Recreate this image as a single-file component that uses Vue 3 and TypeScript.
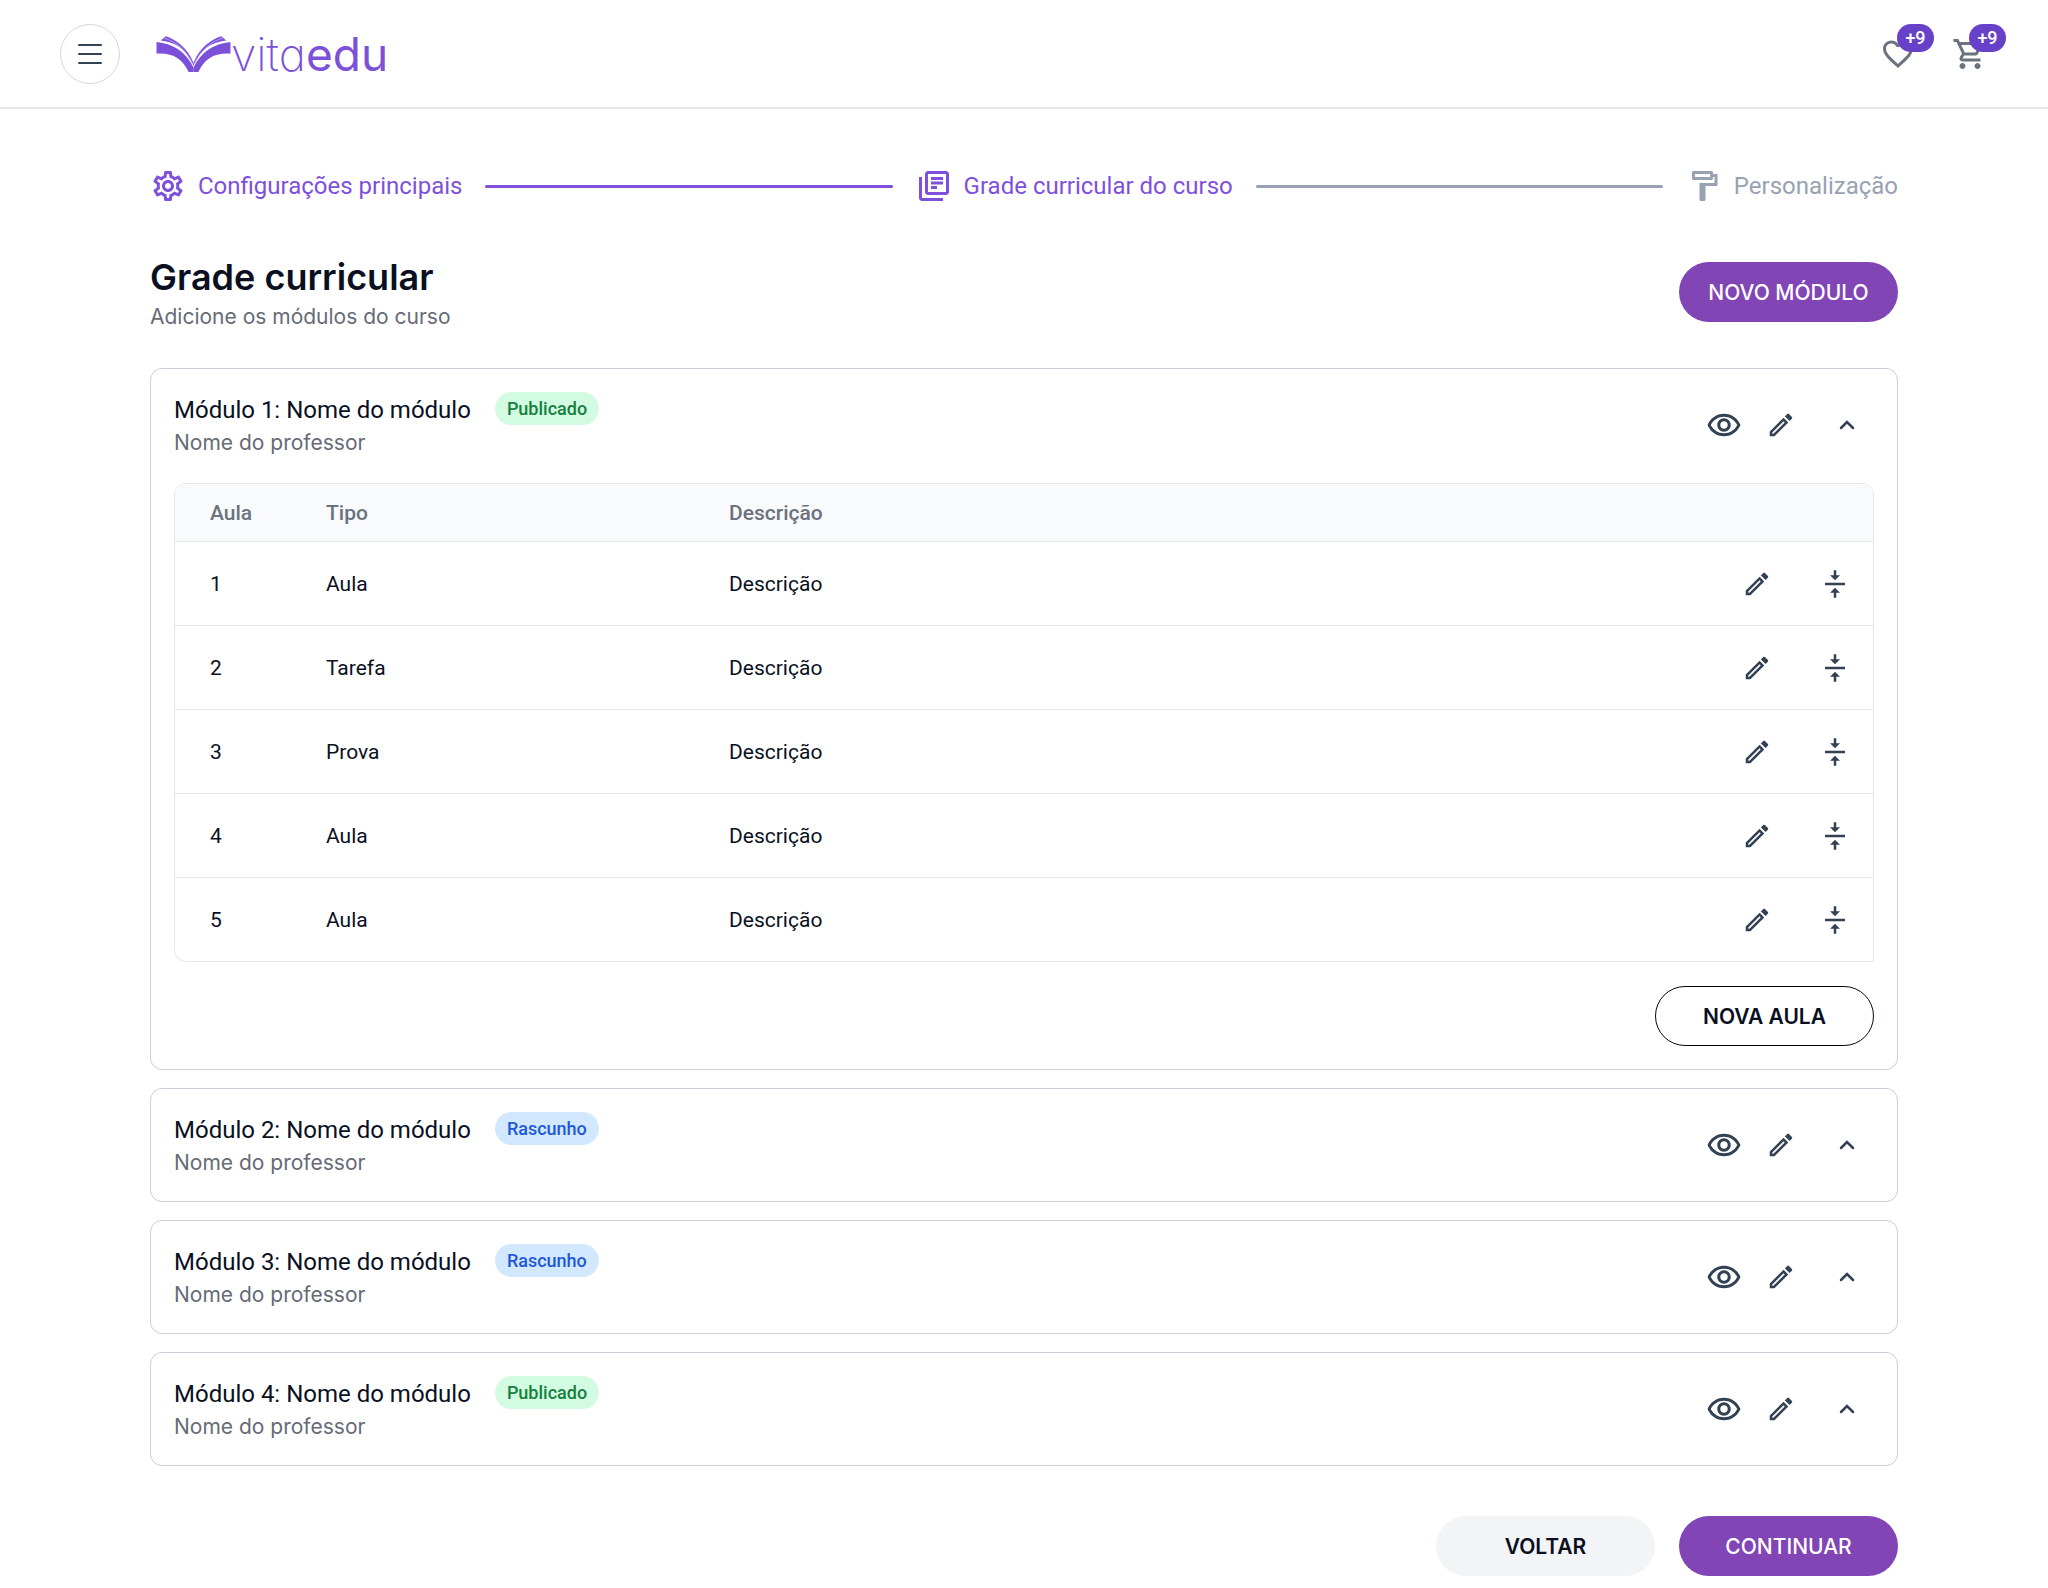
<script setup lang="ts">
import { ref } from 'vue'

type Status = 'Publicado' | 'Rascunho'

interface Lesson {
  id: number
  type: string
  description: string
}

interface CourseModule {
  id: number
  title: string
  teacher: string
  status: Status
  lessons: Lesson[]
}

const icons = {
  settings:
    'M19.43 12.98c.04-.32.07-.64.07-.98 0-.34-.03-.66-.07-.98l2.11-1.65c.19-.15.24-.42.12-.64l-2-3.46c-.09-.16-.26-.25-.44-.25-.06 0-.12.01-.17.03l-2.49 1c-.52-.4-1.08-.73-1.69-.98l-.38-2.65C14.46 2.18 14.25 2 14 2h-4c-.25 0-.46.18-.49.42l-.38 2.65c-.61.25-1.17.59-1.69.98l-2.49-1c-.06-.02-.12-.03-.18-.03-.17 0-.34.09-.43.25l-2 3.46c-.13.22-.07.49.12.64l2.11 1.65c-.04.32-.07.65-.07.98 0 .33.03.66.07.98l-2.11 1.65c-.19.15-.24.42-.12.64l2 3.46c.09.16.26.25.44.25.06 0 .12-.01.17-.03l2.49-1c.52.4 1.08.73 1.69.98l.38 2.65c.03.24.24.42.49.42h4c.25 0 .46-.18.49-.42l.38-2.65c.61-.25 1.17-.59 1.69-.98l2.49 1c.06.02.12.03.18.03.17 0 .34-.09.43-.25l2-3.46c.12-.22.07-.49-.12-.64l-2.11-1.65zm-1.98-1.71c.04.31.05.52.05.73 0 .21-.02.43-.05.73l-.14 1.13.89.7 1.08.84-.7 1.21-1.27-.51-1.04-.42-.9.68c-.43.32-.84.56-1.25.73l-1.06.43-.16 1.13-.2 1.35h-1.4l-.19-1.35-.16-1.13-1.06-.43c-.43-.18-.83-.41-1.23-.71l-.91-.7-1.06.43-1.27.51-.7-1.21 1.08-.84.89-.7-.14-1.13c-.03-.31-.05-.54-.05-.74s.02-.43.05-.73l.14-1.13-.89-.7-1.08-.84.7-1.21 1.27.51 1.04.42.9-.68c.43-.32.84-.56 1.25-.73l1.06-.43.16-1.13.2-1.35h1.39l.19 1.35.16 1.13 1.06.43c.43.18.83.41 1.23.71l.91.7 1.06-.43 1.27-.51.7 1.21-1.07.85-.89.7.14 1.13zM12 8c-2.21 0-4 1.79-4 4s1.79 4 4 4 4-1.79 4-4-1.79-4-4-4zm0 6c-1.1 0-2-.9-2-2s.9-2 2-2 2 .9 2 2-.9 2-2 2z',
  books:
    'M4 6H2v14c0 1.1.9 2 2 2h14v-2H4V6zm16-4H8c-1.1 0-2 .9-2 2v12c0 1.1.9 2 2 2h12c1.1 0 2-.9 2-2V4c0-1.1-.9-2-2-2zm0 14H8V4h12v12zM10 9h8v2h-8zm0 3h4v2h-4zm0-6h8v2h-8z',
  paint:
    'M18 4V3c0-.55-.45-1-1-1H5c-.55 0-1 .45-1 1v4c0 .55.45 1 1 1h12c.55 0 1-.45 1-1V6h1v4H9v11c0 .55.45 1 1 1h2c.55 0 1-.45 1-1v-9h8V4h-3zm-2 2H6V4h10v2z',
  heart:
    'M16.5 3c-1.74 0-3.41.81-4.5 2.09C10.91 3.81 9.24 3 7.5 3 4.42 3 2 5.42 2 8.5c0 3.78 3.4 6.86 8.55 11.54L12 21.35l1.45-1.32C18.6 15.36 22 12.28 22 8.5 22 5.42 19.58 3 16.5 3zm-4.4 15.55l-.1.1-.1-.1C7.14 14.24 4 11.39 4 8.5 4 6.5 5.5 5 7.5 5c1.54 0 3.04.99 3.57 2.36h1.87C13.46 5.99 14.96 5 16.5 5c2 0 3.5 1.5 3.5 3.5 0 2.89-3.14 5.74-7.9 10.05z',
  cart:
    'M15.55 13c.75 0 1.41-.41 1.75-1.03l3.58-6.49c.37-.66-.11-1.48-.87-1.48H5.21l-.94-2H1v2h2l3.6 7.59-1.35 2.44C4.52 15.37 5.48 17 7 17h12v-2H7l1.1-2h7.45zM6.16 6h12.15l-2.76 5H8.53L6.16 6zM7 18c-1.1 0-1.99.9-1.99 2S5.9 22 7 22s2-.9 2-2-.9-2-2-2zm10 0c-1.1 0-1.99.9-1.99 2s.89 2 1.99 2 2-.9 2-2-.9-2-2-2z',
  eye:
    'M12 6c3.79 0 7.17 2.13 8.82 5.5C19.17 14.87 15.79 17 12 17s-7.17-2.13-8.82-5.5C4.83 8.13 8.21 6 12 6m0-2C7 4 2.73 7.11 1 11.5 2.73 15.89 7 19 12 19s9.27-3.11 11-7.5C21.27 7.11 17 4 12 4zm0 5c1.38 0 2.5 1.12 2.5 2.5S13.38 14 12 14s-2.5-1.12-2.5-2.5S10.62 9 12 9m0-2c-2.48 0-4.5 2.02-4.5 4.5S9.52 16 12 16s4.5-2.02 4.5-4.5S14.48 7 12 7z',
  edit:
    'M14.06 9.02l.92.92L5.92 19H5v-.92l9.06-9.06M17.66 3c-.25 0-.51.1-.7.29l-1.83 1.83 3.75 3.75 1.83-1.83c.39-.39.39-1.02 0-1.41l-2.34-2.34c-.2-.2-.45-.29-.71-.29zm-3.6 3.19L3 17.25V21h3.75L17.81 9.94l-3.75-3.75z',
  collapse:
    'M8 19h3v4h2v-4h3l-4-4-4 4zm8-14h-3V1h-2v4H8l4 4 4-4zM4 11v2h16v-2H4z',
}

const lessonTypes = ['Aula', 'Tarefa', 'Prova', 'Aula', 'Aula']
const statuses: Status[] = ['Publicado', 'Rascunho', 'Rascunho', 'Publicado']

const modules = ref<CourseModule[]>(
  statuses.map((status, i) => ({
    id: i + 1,
    title: `Módulo ${i + 1}: Nome do módulo`,
    teacher: 'Nome do professor',
    status,
    lessons: lessonTypes.map((type, n) => ({ id: n + 1, type, description: 'Descrição' })),
  })),
)

const openId = ref<number | null>(1)

function toggle(id: number): void {
  openId.value = openId.value === id ? null : id
}
</script>

<template>
  <div class="page">
    <header class="topbar">
      <button class="menu" type="button" aria-label="Menu">
        <svg viewBox="0 0 24 24" width="24" height="24" aria-hidden="true">
          <path d="M1 3H23M1 12H23M1 21H23" />
        </svg>
      </button>
      <a class="logo" href="#" aria-label="vitaedu">
        <svg class="book" viewBox="348 78 226 110" width="75" height="36" aria-hidden="true">
          <g id="half">
            <path d="M348 96C400 101 438 127 461 174V188H446C428 148 398 129 348 132Z" />
            <path d="M361 92L376 79C400 86 440 108 461 160V170C440 121 410 97 361 92Z" />
            <path class="crease" d="M370 84C408 95 438 120 459 164" />
          </g>
          <use href="#half" transform="translate(922 0) scale(-1 1)" />
        </svg>
        <span class="word"><span class="thin">vita</span><span class="bold">edu</span></span>
      </a>
      <div class="shortcuts">
        <button class="shortcut" type="button" aria-label="Favoritos">
          <svg class="icon-lg" viewBox="0 0 24 24"><path :d="icons.heart" /></svg>
          <span class="count">+9</span>
        </button>
        <button class="shortcut" type="button" aria-label="Carrinho">
          <svg class="icon-lg" viewBox="0 0 24 24"><path :d="icons.cart" /></svg>
          <span class="count">+9</span>
        </button>
      </div>
    </header>

    <main class="content">
      <nav class="stepper" aria-label="Etapas">
        <a class="step" href="#">
          <svg class="icon-lg" viewBox="0 0 24 24"><path :d="icons.settings" /></svg>
          Configurações principais
        </a>
        <span class="rail"></span>
        <a class="step" href="#" aria-current="step">
          <svg class="icon-lg" viewBox="0 0 24 24"><path :d="icons.books" /></svg>
          Grade curricular do curso
        </a>
        <span class="rail pending"></span>
        <a class="step pending" href="#">
          <svg class="icon-lg" viewBox="0 0 24 24"><path :d="icons.paint" /></svg>
          Personalização
        </a>
      </nav>

      <div class="heading">
        <div>
          <h1>Grade curricular</h1>
          <p class="sub">Adicione os módulos do curso</p>
        </div>
        <button class="btn primary" type="button">NOVO MÓDULO</button>
      </div>

      <div class="modules">
        <section v-for="m in modules" :key="m.id" class="card">
          <div class="card-head">
            <div>
              <div class="title-row">
                <h2>{{ m.title }}</h2>
                <span class="badge" :class="m.status.toLowerCase()">{{ m.status }}</span>
              </div>
              <p class="sub">{{ m.teacher }}</p>
            </div>
            <div class="actions">
              <button type="button" aria-label="Visualizar">
                <svg class="icon-lg" viewBox="0 0 24 23"><path :d="icons.eye" /></svg>
              </button>
              <button type="button" aria-label="Editar">
                <svg class="icon" viewBox="0 0 24 24"><path :d="icons.edit" /></svg>
              </button>
              <button class="toggle" type="button" aria-label="Expandir" :aria-expanded="openId === m.id" @click="toggle(m.id)">
                <svg class="icon" viewBox="0 0 30 30"><path d="M9 18L15 12L21 18" /></svg>
              </button>
            </div>
          </div>

          <template v-if="openId === m.id">
            <table class="lessons">
              <thead>
                <tr>
                  <th class="col-num" scope="col">Aula</th>
                  <th class="col-type" scope="col">Tipo</th>
                  <th scope="col">Descrição</th>
                  <td class="col-actions"></td>
                </tr>
              </thead>
              <tbody>
                <tr v-for="l in m.lessons" :key="l.id">
                  <td>{{ l.id }}</td>
                  <td>{{ l.type }}</td>
                  <td>{{ l.description }}</td>
                  <td class="col-actions">
                    <div class="row-actions">
                      <button type="button" aria-label="Editar aula">
                        <svg class="icon" viewBox="0 0 24 24"><path :d="icons.edit" /></svg>
                      </button>
                      <button type="button" aria-label="Mover aula">
                        <svg class="icon" viewBox="0 0 24 24"><path :d="icons.collapse" /></svg>
                      </button>
                    </div>
                  </td>
                </tr>
              </tbody>
            </table>
            <div class="card-foot">
              <button class="btn outline" type="button">NOVA AULA</button>
            </div>
          </template>
        </section>
      </div>

      <div class="page-actions">
        <button class="btn soft" type="button">VOLTAR</button>
        <button class="btn primary" type="button">CONTINUAR</button>
      </div>
    </main>
  </div>
</template>

<style>
body {
  background: #fff;
}
</style>

<style scoped>
.page {
  font-family: Roboto, 'Liberation Sans', sans-serif;
  color: #0a1022;
}

.page * {
  box-sizing: border-box;
}

h1,
h2,
p {
  margin: 0;
}

button {
  padding: 0;
  border: 0;
  background: none;
  color: inherit;
  font-family: inherit;
  cursor: pointer;
}

a {
  text-decoration: none;
}

svg {
  display: block;
  fill: currentColor;
  flex: none;
}

.icon {
  width: 30px;
  height: 30px;
}

.icon-lg {
  width: 36px;
  height: 36px;
}

.topbar {
  display: flex;
  align-items: center;
  padding: 24px 60px 23px;
  border-bottom: 2px solid #e5e7eb;
}

.menu {
  display: flex;
  align-items: center;
  justify-content: center;
  width: 60px;
  height: 60px;
  border: 1px solid #d6d6e2;
  border-radius: 50%;
  color: #334155;
}

.menu svg {
  fill: none;
  stroke: currentColor;
  stroke-width: 2;
  stroke-linecap: round;
}

.logo {
  display: flex;
  align-items: center;
  margin-left: 36px;
  color: #7c51d9;
}

.crease {
  fill: none;
  stroke: #cdbdf1;
  stroke-width: 2;
}

.word {
  font-family: Inter, sans-serif;
  font-size: 46px;
  line-height: 60px;
  font-feature-settings: 'cv11';
}

.thin {
  font-weight: 200;
}

.bold {
  font-weight: 400;
}

.shortcuts {
  display: flex;
  gap: 36px;
  margin-left: auto;
  color: #6b7280;
}

.shortcut {
  position: relative;
}

.count {
  position: absolute;
  top: -12px;
  left: 17px;
  width: 37px;
  border-radius: 14px;
  background: #6741c8;
  color: #fff;
  font-size: 18px;
  font-weight: 500;
  line-height: 28px;
}

.content {
  padding: 59px 150px 12px;
}

.stepper {
  display: flex;
  align-items: center;
  gap: 23px;
}

.step {
  display: flex;
  align-items: center;
  gap: 12px;
  color: #7e50dc;
  font-size: 24px;
  line-height: 36px;
}

.rail {
  flex: 1;
  height: 3px;
  border-radius: 2px;
  background: #7e50dc;
}

.step.pending {
  color: #98a2b3;
}

.rail.pending {
  background: #98a2b3;
}

.heading {
  display: flex;
  align-items: center;
  justify-content: space-between;
  margin: 48px 0 36px;
}

h1 {
  font-family: Inter, sans-serif;
  font-size: 36px;
  font-weight: 600;
  line-height: 50px;
}

.sub {
  color: #666b76;
  font-family: Inter, sans-serif;
  font-size: 21px;
  line-height: 30px;
}

.btn {
  min-width: 219px;
  height: 60px;
  padding: 0 28px;
  border-radius: 30px;
  font-family: Inter, sans-serif;
  font-size: 21px;
  font-weight: 600;
}

.primary {
  background: #8145b5;
  color: #fff;
  font-weight: 500;
}

.outline {
  border: 1px solid #030712;
}

.soft {
  background: #f3f4f6;
}

.modules {
  display: flex;
  flex-direction: column;
  gap: 18px;
}

.card {
  padding: 23px;
  border: 1px solid #c9ced8;
  border-radius: 12px;
}

.card-head {
  display: flex;
  align-items: center;
  justify-content: space-between;
}

.title-row {
  display: flex;
  align-items: flex-start;
  gap: 24px;
}

h2 {
  font-size: 24px;
  font-weight: 400;
  line-height: 36px;
}

.badge {
  padding: 0 12px;
  border-radius: 17px;
  font-size: 18px;
  font-weight: 500;
  line-height: 33px;
}

.publicado {
  background: #d3fbe1;
  color: #15803d;
}

.rascunho {
  background: #d2e8ff;
  color: #1d58d8;
}

.actions {
  display: flex;
  align-items: center;
  gap: 24px;
  padding-right: 12px;
  color: #334155;
}

.toggle {
  margin-left: 12px;
}

.toggle svg {
  fill: none;
  stroke: currentColor;
  stroke-width: 2.5;
  stroke-linecap: round;
}

.lessons {
  width: 100%;
  margin-top: 25px;
  border: 1px solid #e5e7eb;
  border-radius: 12px 12px 0 12px;
  border-spacing: 0;
  table-layout: fixed;
  overflow: hidden;
  font-size: 21px;
}

.lessons th,
.lessons td {
  height: 84px;
  padding: 0 0 0 35px;
  border-top: 1px solid #e5e7eb;
  text-align: left;
}

.lessons thead th,
.lessons thead td {
  height: 57px;
  border-top: 0;
  background: #f9fafc;
  color: #6b7280;
  font-weight: 500;
}

.lessons .col-num {
  width: 116px;
}

.lessons .col-type {
  width: 403px;
}

.lessons .col-actions {
  width: 180px;
  padding: 0 23px 0 0;
}

.row-actions {
  display: flex;
  justify-content: flex-end;
  gap: 48px;
  color: #334155;
}

.card-foot {
  display: flex;
  justify-content: flex-end;
  margin-top: 24px;
}

.page-actions {
  display: flex;
  justify-content: flex-end;
  gap: 24px;
  margin-top: 50px;
}
</style>
